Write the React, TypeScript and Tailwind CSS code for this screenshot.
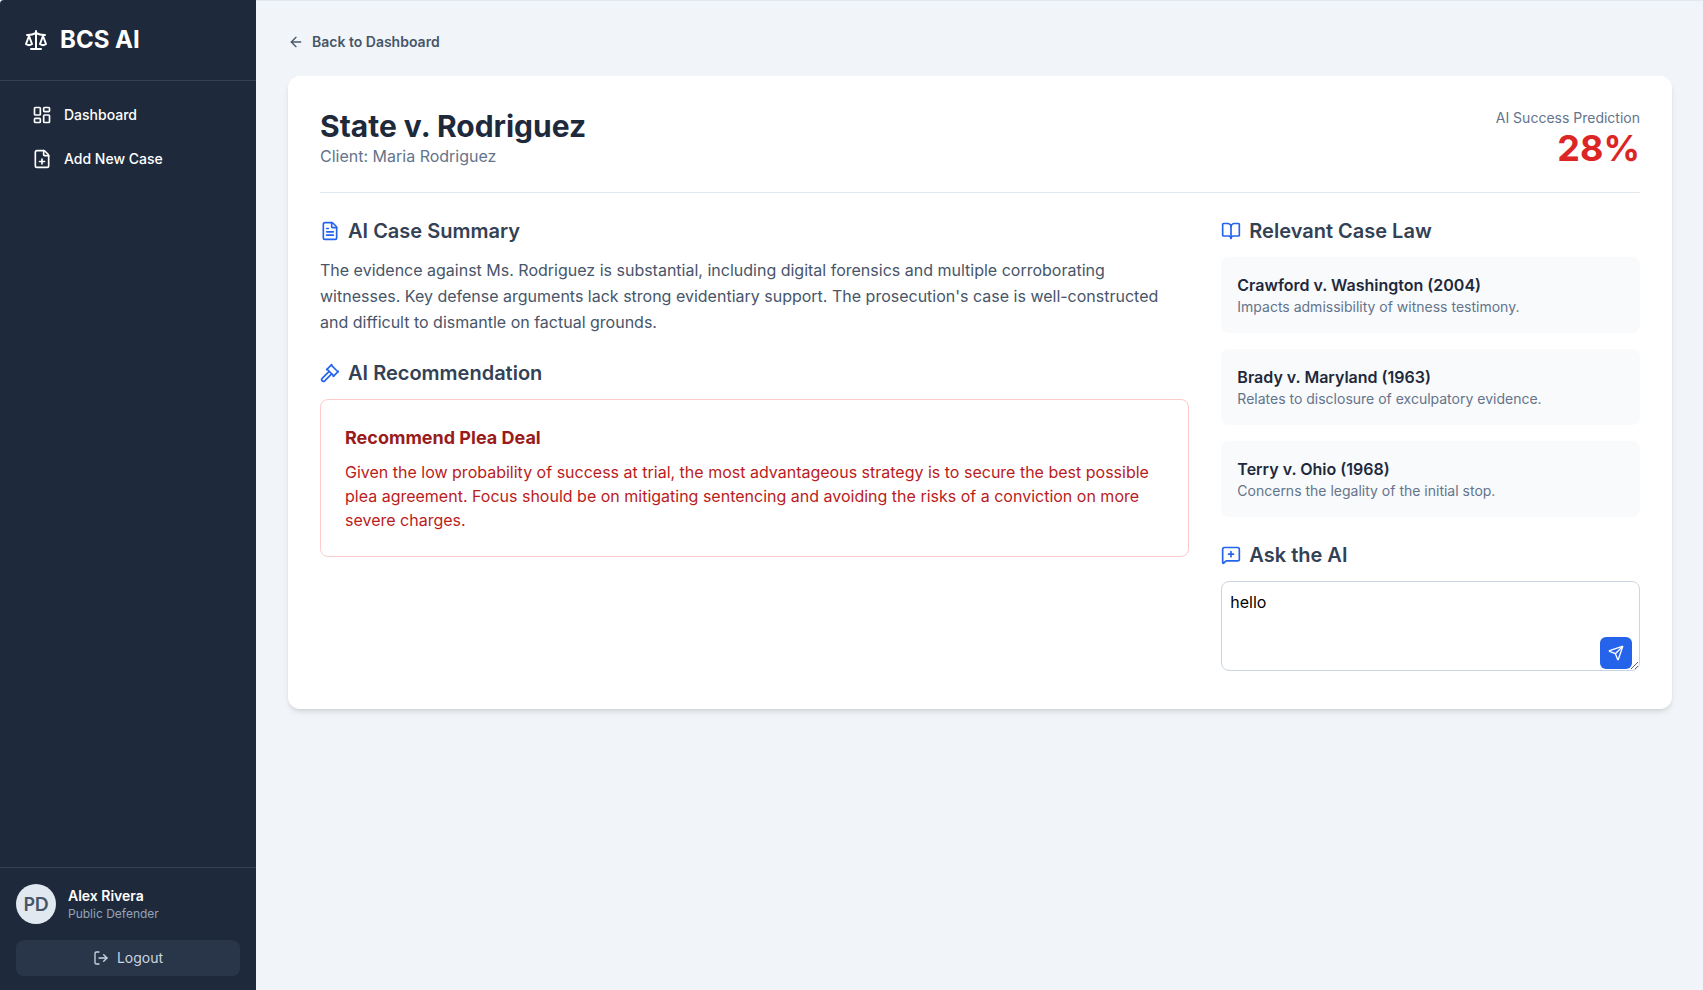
import React from "react";
import {
  ArrowLeft,
  BookOpen,
  FilePlus,
  FileText,
  Gavel,
  LayoutDashboard,
  LogOut,
  MessageSquarePlus,
  Scale,
  Send,
  type LucideIcon,
} from "lucide-react";

const caseLaw = [
  { name: "Crawford v. Washington (2004)", note: "Impacts admissibility of witness testimony." },
  { name: "Brady v. Maryland (1963)", note: "Relates to disclosure of exculpatory evidence." },
  { name: "Terry v. Ohio (1968)", note: "Concerns the legality of the initial stop." },
];

function NavItem({ icon: Icon, label }: { icon: LucideIcon; label: string }) {
  return (
    <a className="flex items-center gap-3 rounded-lg px-4 py-2 text-sm font-medium text-white">
      <Icon className="size-5" />
      {label}
    </a>
  );
}

function SectionTitle({ icon: Icon, children }: { icon: LucideIcon; children: React.ReactNode }) {
  return (
    <h2 className="mb-3 flex items-center gap-2 text-xl font-semibold text-[#334155]">
      <Icon className="size-5 text-[#2563eb]" />
      {children}
    </h2>
  );
}

function Sidebar() {
  return (
    <aside className="flex w-64 shrink-0 flex-col rounded-tl bg-[#1e293b] text-white">
      <div className="flex items-center gap-3 border-b border-[#334155] p-6">
        <Scale className="size-6" />
        <span className="text-2xl font-bold">BCS AI</span>
      </div>
      <nav className="flex flex-1 flex-col gap-2 p-4">
        <NavItem icon={LayoutDashboard} label="Dashboard" />
        <NavItem icon={FilePlus} label="Add New Case" />
      </nav>
      <div className="border-t border-[#334155] px-4 pt-4 pb-3.5">
        <div className="mb-4 flex items-center gap-3">
          <div className="flex size-10 items-center justify-center rounded-full bg-[#e2e8f0] font-['Lato',sans-serif] text-lg font-bold text-[#475569]">
            PD
          </div>
          <div>
            <p className="text-sm font-semibold">Alex Rivera</p>
            <p className="text-xs text-[#94a3b8]">Public Defender</p>
          </div>
        </div>
        <button className="flex w-full items-center justify-center gap-2 rounded-lg bg-[#334155]/50 px-4 py-2 text-sm text-[#cbd5e1]">
          <LogOut className="size-4" />
          Logout
        </button>
      </div>
    </aside>
  );
}

export default function App() {
  return (
    <div className="flex h-[990px] overflow-hidden bg-[#f1f5f9] font-['Inter',sans-serif]">
      <Sidebar />
      <main className="flex-1 border-t border-[#e2e8f0] pt-[31px] pr-[31px] pl-8">
        <button className="mb-6 flex items-center gap-2 text-sm font-semibold text-[#475569]">
          <ArrowLeft className="size-4" />
          Back to Dashboard
        </button>
        <div className="rounded-xl bg-white p-8 shadow-md">
          <header className="mb-6 flex items-start justify-between border-b border-[#e2e8f0] pb-6">
            <div>
              <h1 className="text-3xl font-bold text-[#1e293b]">State v. Rodriguez</h1>
              <p className="text-[#64748b]">Client: Maria Rodriguez</p>
            </div>
            <div className="text-right">
              <p className="text-sm text-[#64748b]">AI Success Prediction</p>
              <p className="text-4xl font-bold text-[#dc2626]">28%</p>
            </div>
          </header>
          <div className="grid grid-cols-3 gap-8">
            <div className="col-span-2 space-y-6">
              <section>
                <SectionTitle icon={FileText}>AI Case Summary</SectionTitle>
                <p className="leading-[26px] text-[#475569]">
                  The evidence against Ms. Rodriguez is substantial, including digital forensics and
                  multiple corroborating witnesses. Key defense arguments lack strong evidentiary
                  support. The prosecution's case is well-constructed and difficult to dismantle on
                  factual grounds.
                </p>
              </section>
              <section>
                <SectionTitle icon={Gavel}>AI Recommendation</SectionTitle>
                <div className="rounded-lg border border-[#fecaca] p-6">
                  <h3 className="mb-2 text-lg font-bold text-[#991b1b]">Recommend Plea Deal</h3>
                  <p className="text-[#b91c1c]">
                    Given the low probability of success at trial, the most advantageous strategy is
                    to secure the best possible plea agreement. Focus should be on mitigating
                    sentencing and avoiding the risks of a conviction on more severe charges.
                  </p>
                </div>
              </section>
            </div>
            <div className="space-y-6">
              <section>
                <SectionTitle icon={BookOpen}>Relevant Case Law</SectionTitle>
                <ul className="space-y-4">
                  {caseLaw.map((item) => (
                    <li key={item.name} className="rounded-lg bg-[#f8fafc] p-4">
                      <p className="font-semibold text-[#1e293b]">{item.name}</p>
                      <p className="text-sm text-[#64748b]">{item.note}</p>
                    </li>
                  ))}
                </ul>
              </section>
              <section>
                <SectionTitle icon={MessageSquarePlus}>Ask the AI</SectionTitle>
                <div className="relative h-24">
                  <textarea
                    rows={3}
                    defaultValue="hello"
                    className="block w-full rounded-lg border border-[#cbd5e1] bg-white p-2 text-black"
                  />
                  <button className="absolute right-2 bottom-2 rounded-md bg-[#2563eb] p-2 text-white">
                    <Send className="size-4" />
                  </button>
                </div>
              </section>
            </div>
          </div>
        </div>
      </main>
    </div>
  );
}
